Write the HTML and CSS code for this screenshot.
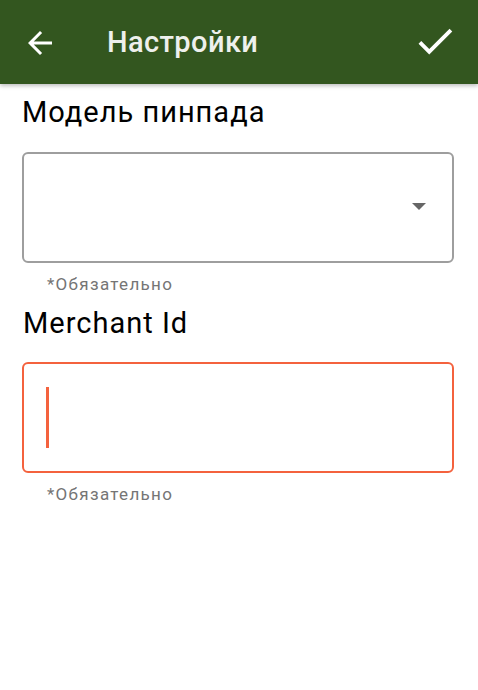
FILE: index.html
```html
<!DOCTYPE html>
<html lang="ru">
<head>
    <meta charset="UTF-8">
    <meta name="viewport" content="width=device-width, initial-scale=1.0">
    <title>Настройки</title>
    <link rel="stylesheet" href="styles.css">
</head>
<body>
    <div class="toolbar">
        <button class="icon-btn back-btn" aria-label="Назад">
            <svg width="36" height="36" viewBox="0 0 24 24">
                <path d="M20 11H7.83l5.59-5.59L12 4l-8 8 8 8 1.41-1.41L7.83 13H20v-2z" fill="#fff"/>
            </svg>
        </button>
        <h1 class="toolbar-title">Настройки</h1>
        <button class="icon-btn save-btn" aria-label="Сохранить">
            <svg width="46" height="46" viewBox="0 0 24 24">
                <path d="M9 16.17L4.83 12l-1.42 1.41L9 19 21 7l-1.41-1.41z" fill="#fff"/>
            </svg>
        </button>
    </div>

    <div class="content">
        <div class="field">
            <label class="field-label">Модель пинпада</label>
            <div class="select-box">
                <span class="dropdown-arrow"></span>
            </div>
            <p class="helper">*Обязательно</p>
        </div>

        <div class="field">
            <label class="field-label label-merchant">Merchant Id</label>
            <div class="text-box error">
                <span class="caret"></span>
            </div>
            <p class="helper">*Обязательно</p>
        </div>
    </div>
</body>
</html>
```

FILE: styles.css
```css
body {
    margin: 0;
    font-family: Roboto, "Noto Sans", sans-serif;
    background-color: #fff;
    width: 478px;
    height: 690px;
    overflow: hidden;
}

.toolbar {
    height: 84px;
    background-color: #33561f;
    display: flex;
    align-items: center;
    box-shadow: 0 2px 4px rgba(0, 0, 0, 0.25);
    position: relative;
}

.icon-btn {
    background: none;
    border: none;
    padding: 0;
    display: flex;
    cursor: pointer;
}

.back-btn {
    margin-left: 22px;
    margin-top: 2px;
}

.toolbar-title {
    margin: 0 0 0 49px;
    flex: 1;
    color: #eef0ec;
    font-size: 29px;
    font-weight: 500;
    letter-spacing: 0.4px;
}

.save-btn {
    margin-right: 20px;
    margin-top: -2px;
}

.content {
    padding: 0 24px 0 22px;
}

.field-label {
    display: block;
    margin-top: 11px;
    font-size: 29px;
    line-height: 34px;
    letter-spacing: 1px;
    color: #000;
}

.label-merchant {
    margin-top: 12px;
    padding-left: 1px;
}

.select-box,
.text-box {
    margin-top: 23px;
    height: 111px;
    box-sizing: border-box;
    border: 2px solid #9e9e9e;
    border-radius: 6px;
    display: flex;
    align-items: center;
}

.select-box {
    justify-content: flex-end;
}

.text-box.error {
    border-color: #f4623e;
    margin-top: 22px;
}

.dropdown-arrow {
    width: 0;
    height: 0;
    border-left: 7.5px solid transparent;
    border-right: 7.5px solid transparent;
    border-top: 7.5px solid #666;
    margin-right: 26px;
    margin-top: -2px;
}

.caret {
    width: 3px;
    height: 61px;
    margin-left: 22px;
    background-color: #f4623e;
}

.helper {
    margin: 11px 0 0 25px;
    font-size: 17px;
    line-height: 20px;
    color: #757575;
    letter-spacing: 1.3px;
}
```
